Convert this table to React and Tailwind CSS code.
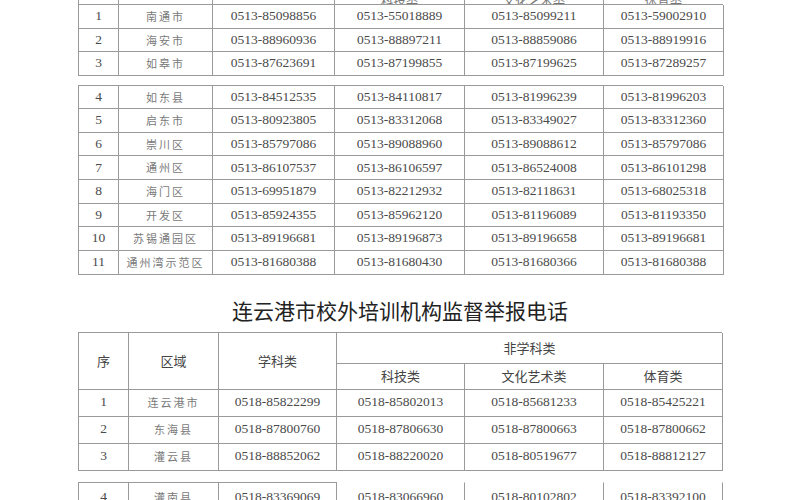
// Scanned hotline tables: 南通 (tail of the table) + 连云港 校外培训机构监督举报电话

const COLS_A = 'grid-cols-[40px_94px_122px_130px_139px_120px]';
const COLS_B = 'grid-cols-[50px_90px_118px_128px_139px_119px]';

const SERIF = { fontFamily: '"Liberation Serif", "Noto Sans CJK SC", serif' };
const CJK = { fontFamily: '"Noto Sans CJK SC", "Noto Sans", sans-serif' };

const nantongTop = [
  ['1', '南通市', '0513-85098856', '0513-55018889', '0513-85099211', '0513-59002910'],
  ['2', '海安市', '0513-88960936', '0513-88897211', '0513-88859086', '0513-88919916'],
  ['3', '如皋市', '0513-87623691', '0513-87199855', '0513-87199625', '0513-87289257'],
];

const nantongRest = [
  ['4', '如东县', '0513-84512535', '0513-84110817', '0513-81996239', '0513-81996203'],
  ['5', '启东市', '0513-80923805', '0513-83312068', '0513-83349027', '0513-83312360'],
  ['6', '崇川区', '0513-85797086', '0513-89088960', '0513-89088612', '0513-85797086'],
  ['7', '通州区', '0513-86107537', '0513-86106597', '0513-86524008', '0513-86101298'],
  ['8', '海门区', '0513-69951879', '0513-82212932', '0513-82118631', '0513-68025318'],
  ['9', '开发区', '0513-85924355', '0513-85962120', '0513-81196089', '0513-81193350'],
  ['10', '苏锡通园区', '0513-89196681', '0513-89196873', '0513-89196658', '0513-89196681'],
  ['11', '通州湾示范区', '0513-81680388', '0513-81680430', '0513-81680366', '0513-81680388'],
];

const lyg = [
  ['1', '连云港市', '0518-85822299', '0518-85802013', '0518-85681233', '0518-85425221'],
  ['2', '东海县', '0518-87800760', '0518-87806630', '0518-87800663', '0518-87800662'],
  ['3', '灌云县', '0518-88852062', '0518-88220020', '0518-80519677', '0518-88812127'],
];

const lygCut = ['4', '灌南县', '0518-83369069', '0518-83066960', '0518-80102802', '0518-83392100'];

const cell = 'flex items-center justify-center border-r border-b border-[#9a9a9a]';

function Row({ cols, h, data, cut = false }) {
  return (
    <div className={`grid ${cols} ${h}`}>
      {data.map((v, i) => (
        <div
          key={i}
          className={`${cell} ${cut ? 'border-t' : ''} ${cut && i >= 3 ? 'border-t-transparent' : ''}`}
        >
          {i === 1 ? (
            <span className="text-[11px] tracking-[2px] text-[#7a7a7a]" style={CJK}>{v}</span>
          ) : (
            <span className="text-[13.5px] text-[#4a4a4a]" style={SERIF}>{v}</span>
          )}
        </div>
      ))}
    </div>
  );
}

export default function App() {
  return (
    <div className="h-[500px] w-[800px] overflow-hidden bg-white">
      <div className="ml-[78px] w-[645px]">
        {/* first table, cut off at the top */}
        <div className="border-l border-[#9a9a9a]">
          <div className={`grid ${COLS_A} h-[5px] overflow-hidden`}>
            {['', '', '', '科技类', '文化艺术类', '体育类'].map((t, i) => (
              <div key={i} className="flex items-end justify-center overflow-hidden border-r border-b border-[#9a9a9a]">
                <span className="mb-[-3px] text-[12.5px] leading-[12px] text-[#777]" style={CJK}>{t}</span>
              </div>
            ))}
          </div>
          {nantongTop.map((r) => (
            <Row key={r[0]} cols={COLS_A} h="h-[23.5px]" data={r} />
          ))}
        </div>

        <div className="mt-[9px] border-l border-t border-[#9a9a9a]">
          {nantongRest.map((r) => (
            <Row key={r[0]} cols={COLS_A} h="h-[23.625px]" data={r} />
          ))}
        </div>
      </div>

      {/* title */}
      <div className="flex h-[57px] items-end justify-center pb-[11px]">
        <h1 className="text-[21px] leading-[21px] text-[#222]" style={CJK}>连云港市校外培训机构监督举报电话</h1>
      </div>

      <div className="ml-[78px] w-[644px]">
        <div className="border-l border-t border-[#9a9a9a]">
          <div className={`grid ${COLS_B} grid-rows-[31px_26px] text-[13px] text-[#444]`} style={CJK}>
            <div className={`${cell} row-span-2`}>序</div>
            <div className={`${cell} row-span-2`}>区域</div>
            <div className={`${cell} row-span-2`}>学科类</div>
            <div className={`${cell} col-span-3`}>非学科类</div>
            <div className={cell}>科技类</div>
            <div className={cell}>文化艺术类</div>
            <div className={cell}>体育类</div>
          </div>
          {lyg.map((r) => (
            <Row key={r[0]} cols={COLS_B} h="h-[27px]" data={r} />
          ))}
        </div>

        <div className="mt-[11px] border-l border-[#9a9a9a]">
          <Row cols={COLS_B} h="h-[31px]" data={lygCut} cut />
        </div>
      </div>
    </div>
  );
}
